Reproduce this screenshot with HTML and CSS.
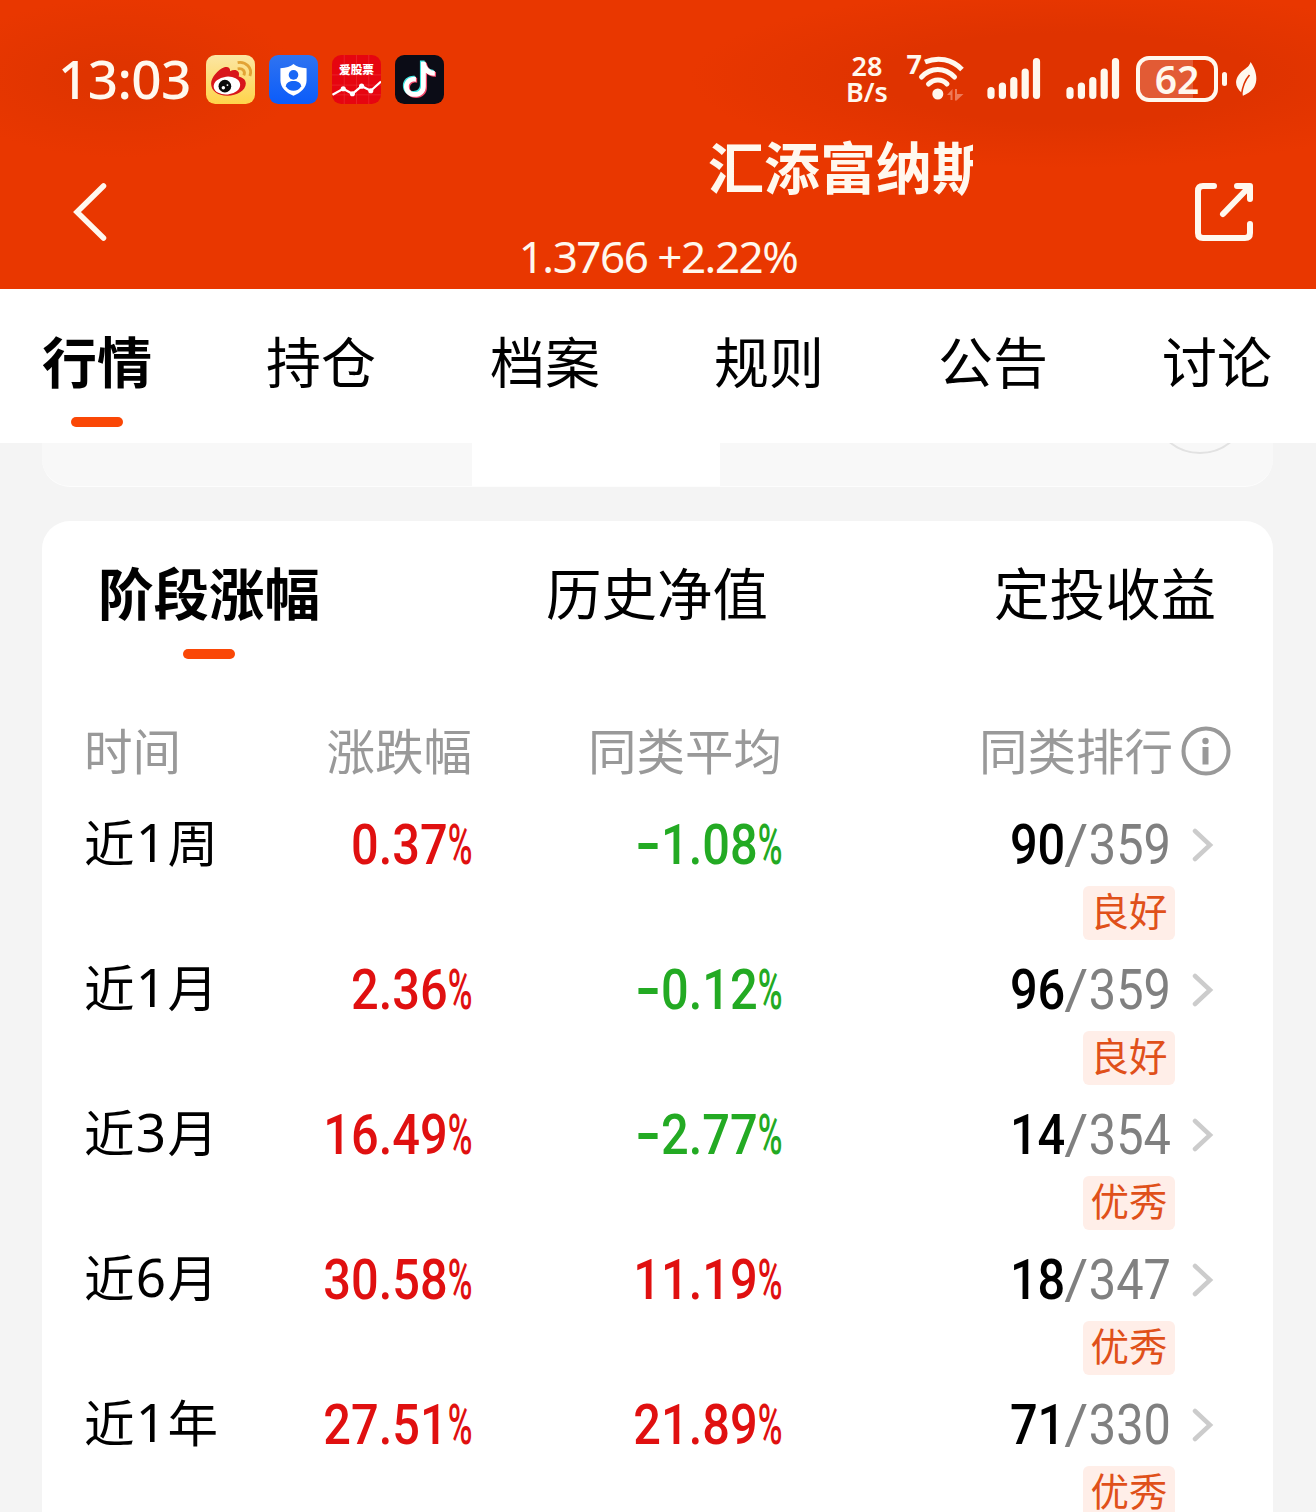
FILE: index.html
```html
<!DOCTYPE html>
<html lang="zh-CN">
<head>
    <meta charset="UTF-8">
    <title>汇添富纳斯</title>
    <link rel="stylesheet" href="styles.css">
</head>
<body>
    <header class="header">
        <!-- Status bar -->
        <div class="status-bar">
            <span class="clock">13:03</span>
            <div class="app-icons">
                <svg class="app-icon" viewBox="0 0 48 48">
                    <defs>
                        <linearGradient id="sand" x1="0" y1="0" x2="0" y2="1"><stop offset="0" stop-color="#fbe6a4"/><stop offset="1" stop-color="#ffd44a"/></linearGradient>
                    </defs>
                    <rect width="48" height="48" rx="9" fill="url(#sand)"/>
                    <path d="M5 28C5 22 12 14 18 12C22 11 24 13 23.500 16C28 13 34 15 32 21C36 22 39 24 39 28C39 35 30 40 21 40C11 40 5 35 5 28Z" fill="#d8161b"/>
                    <ellipse cx="20.500" cy="30" rx="13" ry="8.800" fill="#fff" transform="rotate(-6 20 30)"/>
                    <circle cx="18.500" cy="30.500" r="6.200" fill="#0a0a0a"/>
                    <circle cx="17" cy="32" r="1.700" fill="#fff"/>
                    <circle cx="21" cy="29.500" r="0.900" fill="#fff"/>
                    <path d="M31 7.500C39 6 46 13 43 20.500M31 13.500C36 12.500 39 16 37 20" fill="none" stroke="#e2a335" stroke-width="2.800"/>
                </svg>
                <svg class="app-icon" viewBox="0 0 48 48">
                    <defs>
                        <linearGradient id="sky" x1="0" y1="0" x2="0" y2="1"><stop offset="0" stop-color="#2f73f0"/><stop offset="1" stop-color="#0b5cfa"/></linearGradient>
                    </defs>
                    <rect width="48" height="48" rx="9" fill="url(#sky)"/>
                    <path d="M24 8.800C27 11.200 31 12.600 36.800 13V25C36.800 32 31 37 24 40C17 37 11.200 32 11.200 25V13C17 12.600 21 11.200 24 8.800Z" fill="#fff"/>
                    <circle cx="24" cy="19.500" r="4.700" fill="#1a67f5"/>
                    <path d="M16.500 30.500C17 27 20 25.500 24 25.500S31 27 31.500 30.500C30 33.500 27 35 24 35S18 33.500 16.500 30.500Z" fill="#1564f6"/>
                </svg>
                <svg class="app-icon" viewBox="0 0 48 48">
                    <rect width="48" height="48" rx="9" fill="#e60510"/>
                    <path d="M0 19.500H48M0 29.500H48M24 0V48M12 0V48M36 0V48M0 39H48" stroke="#ee3a40" stroke-width="0.500"/>
                    <text class="icon-text" x="24" y="19" text-anchor="middle">爱股票</text>
                    <path d="M0.500 39L11 33L20 38L29 30.500L38 35L48 26" fill="none" stroke="#fff" stroke-width="2.200"/>
                    <g fill="#fff"><circle cx="11" cy="33" r="2.500"/><circle cx="20" cy="38" r="2.500"/><circle cx="29" cy="30.500" r="2.500"/><circle cx="38" cy="35" r="2.500"/></g>
                </svg>
                <svg class="app-icon" viewBox="0 0 48 48">
                    <defs>
                        <path id="note" d="M25.500 6.500H30C30.500 11.500 34 15.300 39 15.700V20.400C35.500 20.400 32.500 19.300 30.200 17.500V30.500C30.200 37 25.500 41 19.500 41C13 41 8.800 36.500 8.800 31C8.800 25 14 20.700 20.500 21.400V26.200C16.500 25.200 13.500 27.700 13.500 31C13.500 34 16 36.300 19.300 36.300C23 36.300 25.500 34 25.500 30Z"/>
                    </defs>
                    <rect width="48" height="48" rx="9" fill="#0b0c16"/>
                    <use href="#note" x="-1.100" y="-1" fill="#3fe4e0"/>
                    <use href="#note" x="1.200" y="1" fill="#f2486c"/>
                    <use href="#note" fill="#fff"/>
                </svg>
            </div>
            <div class="net-speed"><span>28</span><span>B/s</span></div>
            <svg class="wifi" viewBox="0 0 60 52">
                <text class="wifi-gen" x="0.500" y="20.500">7</text>
                <g fill="none" stroke="#fff8ee" stroke-width="5" stroke-linecap="round">
                    <path d="M19 9C32 3.500 46 6 56 16.500" stroke-linecap="butt"/>
                    <path d="M15.500 24C25 14 38.500 14 48.500 24"/>
                    <path d="M22.500 31C28 25.500 36 25.500 41 31"/>
                </g>
                <circle cx="31.800" cy="41" r="5.500" fill="#fff8ee"/>
                <path d="M41 42L46.500 36V47H44.500V42ZM49 36H51V41H57.500L50.500 47.500H49Z" fill="#ee7a58"/>
            </svg>
            <svg class="signal" viewBox="0 0 54 44"><path d="M4 33.500V38.500M15.400 29V38.500M26.800 23.500V38.500M38.200 15V38.500M49.500 4.500V38.500"/></svg>
            <svg class="signal" viewBox="0 0 54 44"><path d="M4 33.500V38.500M15.400 29V38.500M26.800 23.500V38.500M38.200 15V38.500M49.500 4.500V38.500"/></svg>
            <div class="battery"><span>62</span></div>
            <svg class="leaf" viewBox="0 0 22 36">
                <path d="M15.500 1C22 10 25 24 14 31.500C11 33.500 8.500 34 8 35L7 32C-2 25 0 16 8 9.500C12 6.500 14.500 5 15.500 1Z" fill="#fff8ee"/>
                <path d="M6.500 34C7.500 25 10 19 14.500 14" fill="none" stroke="#de3300" stroke-width="1.600"/>
            </svg>
        </div>

        <!-- Title bar -->
        <div class="title-bar">
            <svg class="back" viewBox="0 0 36 60"><path d="M31.500 4L5 30L31.500 56"/></svg>
            <div class="title">
                <div class="marquee">汇添富纳斯</div>
                <div class="quote">1.3766 +2.22%</div>
            </div>
            <svg class="share" viewBox="0 0 60 60"><path d="M20 4H9Q4 4 4 9V51Q4 56 9 56H51Q56 56 56 51V42M43 4H56V17M55 5L29 32"/></svg>
        </div>
    </header>

    <nav class="tabs">
        <span class="tab active">行情</span>
        <span class="tab">持仓</span>
        <span class="tab">档案</span>
        <span class="tab">规则</span>
        <span class="tab">公告</span>
        <span class="tab">讨论</span>
    </nav>

    <div class="prev-card">
        <div class="prev-selected"></div>
        <div class="prev-circle"></div>
    </div>

    <main class="card">
        <div class="subtabs">
            <span class="tab active">阶段涨幅</span>
            <span class="tab">历史净值</span>
            <span class="tab">定投收益</span>
        </div>

        <div class="row head">
            <span>时间</span>
            <span class="right">涨跌幅</span>
            <span class="right">同类平均</span>
            <span class="right">同类排行</span>
            <svg class="info" viewBox="0 0 50 50"><circle cx="25" cy="25" r="22.500" fill="none" stroke="#999" stroke-width="4"/><circle cx="24.500" cy="15" r="3.200" fill="#999"/><path d="M24.500 21V38.500" stroke="#999" stroke-width="6"/></svg>
        </div>

        <div class="row">
            <span class="time">近<i>1</i>周</span>
            <span class="num up">0.37<b>%</b></span>
            <span class="num down"><u></u>1.08<b>%</b></span>
            <span class="rank"><em>90</em><i>/</i>359</span>
            <svg class="arrow" viewBox="0 0 22 36"><path d="M3 4L18 18L3 32"/></svg>
            <span class="tag">良好</span>
        </div>
        <div class="row">
            <span class="time">近<i>1</i>月</span>
            <span class="num up">2.36<b>%</b></span>
            <span class="num down"><u></u>0.12<b>%</b></span>
            <span class="rank"><em>96</em><i>/</i>359</span>
            <svg class="arrow" viewBox="0 0 22 36"><path d="M3 4L18 18L3 32"/></svg>
            <span class="tag">良好</span>
        </div>
        <div class="row">
            <span class="time">近<i>3</i>月</span>
            <span class="num up">16.49<b>%</b></span>
            <span class="num down"><u></u>2.77<b>%</b></span>
            <span class="rank"><em>14</em><i>/</i>354</span>
            <svg class="arrow" viewBox="0 0 22 36"><path d="M3 4L18 18L3 32"/></svg>
            <span class="tag">优秀</span>
        </div>
        <div class="row">
            <span class="time">近<i>6</i>月</span>
            <span class="num up">30.58<b>%</b></span>
            <span class="num up">11.19<b>%</b></span>
            <span class="rank"><em>18</em><i>/</i>347</span>
            <svg class="arrow" viewBox="0 0 22 36"><path d="M3 4L18 18L3 32"/></svg>
            <span class="tag">优秀</span>
        </div>
        <div class="row">
            <span class="time">近<i>1</i>年</span>
            <span class="num up">27.51<b>%</b></span>
            <span class="num up">21.89<b>%</b></span>
            <span class="rank"><em>71</em><i>/</i>330</span>
            <svg class="arrow" viewBox="0 0 22 36"><path d="M3 4L18 18L3 32"/></svg>
            <span class="tag">优秀</span>
        </div>
    </main>
</body>
</html>
```

FILE: styles.css
```css
* { box-sizing: border-box; }
body {
    margin: 0;
    width: 1316px; height: 1512px;
    overflow: hidden;
    background: #f4f4f4;
    color: #000;
    font-family: "Noto Sans CJK SC", sans-serif;
}
svg { display: block; flex: none; }

/* Header */
.header {
    height: 289px;
    background:
        radial-gradient(ellipse 180px 80px at 120px 78px, #df3400 20%, rgba(223,52,0,0) 100%),
        radial-gradient(ellipse 380px 90px at 1070px 78px, #df3300 50%, rgba(223,51,0,0) 100%),
        #e93700;
    color: #fff8ee;
}
.status-bar {
    display: flex; align-items: center;
    height: 130px;
    padding: 28px 56px 0 58px;
    font-family: "Noto Sans", sans-serif;
}
.clock { width: 148px; font-size: 53px; line-height: 60px; font-weight: 500; letter-spacing: -0.600px; }
.app-icons { display: flex; gap: 14px; margin-right: 401px; }
.app-icon { width: 49px; height: 49px; }
.icon-text { font-family: "Noto Sans CJK SC", sans-serif; font-size: 11.500px; font-weight: 900; fill: #fff; }
.net-speed {
    display: flex; flex-direction: column; align-items: center;
    width: 44px;
    font-size: 27px; line-height: 26px; font-weight: 600;
}
.wifi { width: 60px; height: 52px; margin-left: 17px; overflow: visible; }
.wifi-gen { font-size: 27px; font-weight: 700; fill: #fff8ee; }
.signal { width: 54px; height: 44px; margin-left: 25px; }
.wifi + .signal { margin-left: 21px; }
.signal path { fill: none; stroke: #fff8ee; stroke-width: 7.200; stroke-linecap: round; }
.battery {
    position: relative;
    display: flex; align-items: center; justify-content: center;
    width: 82px; height: 46px;
    margin-left: 16px;
    border: 4px solid #fff8ee; border-radius: 13px;
    background: linear-gradient(90deg, #e25b35 53px, transparent 53px);
    font-size: 39px; line-height: 38px; font-weight: 600;
}
.battery::after {
    content: "";
    position: absolute; right: -13px; top: 12px;
    width: 5px; height: 14px;
    border-radius: 3px;
    background: #fff8ee;
}
.leaf { width: 22px; height: 36px; margin-left: 17px; }

.title-bar { display: flex; height: 159px; padding: 0 62px 0 72px; }
.back { width: 36px; height: 60px; margin-top: 52px; }
.back path { fill: none; stroke: #fff8ee; stroke-width: 5.500; stroke-linecap: round; }
.share { width: 60px; height: 60px; margin-top: 52px; }
.share path { fill: none; stroke: #fff8ee; stroke-width: 6; stroke-linecap: round; stroke-linejoin: round; }
.title { width: 630px; margin: 0 221px 0 235px; }
.marquee {
    height: 76px; padding-left: 365px;
    overflow: hidden; white-space: nowrap;
    font-size: 56px; line-height: 69px; font-weight: 700;
}
.quote { margin-top: 20px; font-family: "Noto Sans", sans-serif; font-size: 44px; line-height: 60px; text-align: center; letter-spacing: -1.500px; }

/* Tabs */
.tabs {
    display: flex; justify-content: space-between;
    height: 154px; padding: 30px 44px 0 42px;
    background: #fff;
}
.tab { display: flex; flex-direction: column; align-items: center; font-size: 55px; line-height: 80px; }
.tab.active { font-weight: 700; }
.tab.active::after {
    content: "";
    width: 52px; height: 10px; margin-top: 18px;
    border-radius: 5px;
    background: #fa4706;
}

/* Bottom edge of the card scrolled under the tabs */
.prev-card {
    position: relative; overflow: hidden;
    height: 44px; margin: 0 43px 34px 42px;
    border-bottom: 1px solid #fdfdfd;
    border-radius: 0 0 28px 28px;
    background: #f8f8f8;
}
.prev-selected { width: 248px; height: 44px; margin-left: 430px; background: #fff; }
.prev-circle {
    position: absolute; left: 1109px; top: -87px;
    width: 98px; height: 98px;
    border: 2px solid #e2e2e2; border-radius: 50%;
}

/* Performance card */
.card {
    height: 991px; margin: 0 43px 0 42px;
    overflow: hidden;
    border-radius: 28px 28px 0 0;
    background: #fff;
}
.subtabs { display: flex; justify-content: space-between; height: 182px; padding: 30px 57px 0 56px; }
.subtabs .tab { font-size: 55.500px; }

.row {
    display: grid;
    grid-template-columns: 138px 250px 310px 389px 60px;
    grid-template-rows: 86px 54px;
    align-items: center;
    height: 145px; padding-left: 42px;
}
.head { grid-template-rows: 96px; height: 97px; color: #999; font-size: 48.500px; line-height: 70px; }
.head span { margin-top: -5px; }
.head .right:nth-child(4) { margin-right: -2px; }
.right { text-align: right; }
.info { width: 50px; height: 50px; margin-left: 10px; }
.time { margin-top: -5px; font-size: 50.500px; line-height: 70px; white-space: nowrap; }
.time i { display: inline-block; width: 33px; font-family: "Noto Sans", sans-serif; font-size: 53px; font-style: normal; text-align: center; }

/* Condensed figures */
.num, .rank {
    display: flex; align-items: center; justify-content: flex-end;
    margin-top: 3px;
    font-family: Roboto, sans-serif;
    font-size: 56px; line-height: 66px;
    transform: scaleX(.87); transform-origin: right;
}
.num { font-weight: 500; }
.num b { width: 28px; font-weight: 500; transform: scaleX(.69); transform-origin: left; }
.num u { width: 22px; height: 6px; margin: 2px 4px 0 0; background: #23aa23; }
.up { color: #e01010; }
.down { color: #23aa23; }
.rank { color: #808080; }
.rank em { margin-right: 4px; color: #000; font-style: normal; font-weight: 500; }
.rank i { font-style: normal; transform: scaleX(1.200); transform-origin: right; }
.arrow { width: 22px; height: 36px; margin: 3px 0 0 21px; }
.arrow path { fill: none; stroke: #ccc; stroke-width: 4.500; stroke-linecap: round; }
.tag {
    grid-column: 4; justify-self: end;
    width: 92px; height: 54px; margin-right: -4px;
    border-radius: 6px;
    background: #ffeee8; color: #e0501a;
    font-size: 38.500px; line-height: 46px; text-align: center;
}
```
